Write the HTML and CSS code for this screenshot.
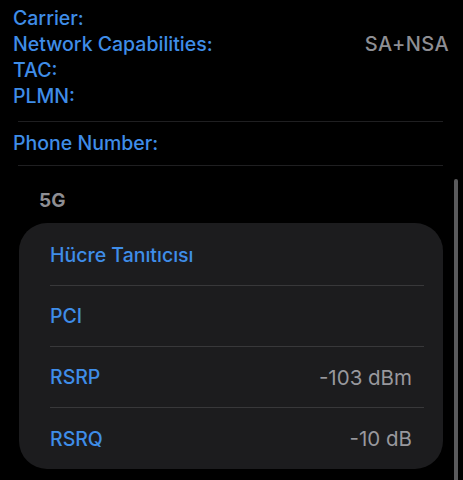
FILE: index.html
```html
<!DOCTYPE html>
<html lang="tr">
<head>
  <meta charset="UTF-8">
  <meta name="viewport" content="width=device-width, initial-scale=1.0">
  <title>Field Test</title>
  <link rel="stylesheet" href="styles.css">
</head>
<body>
  <div class="screen">
    <section class="info">
      <div class="info-row"><span>Carrier:</span></div>
      <div class="info-row"><span>Network Capabilities:</span><span class="value">SA+NSA</span></div>
      <div class="info-row"><span>TAC:</span></div>
      <div class="info-row"><span>PLMN:</span></div>
    </section>
    <hr class="divider">
    <div class="phone">Phone Number:</div>
    <hr class="divider divider-last">

    <section class="group">
      <h2 class="group-title">5G</h2>
      <div class="card">
        <div class="card-row"><span>Hücre Tanıtıcısı</span></div>
        <div class="card-row"><span>PCI</span></div>
        <div class="card-row"><span>RSRP</span><span class="value">-103 dBm</span></div>
        <div class="card-row"><span>RSRQ</span><span class="value">-10 dB</span></div>
      </div>
    </section>

    <!-- kaydırma çubuğu -->
    <div class="scrollbar"></div>
  </div>
</body>
</html>
```

FILE: styles.css
```css
* {
  margin: 0;
  padding: 0;
  box-sizing: border-box;
}

body {
  font-family: Inter, "Noto Sans", sans-serif;
  background-color: #000;
  color: #3f8de8;
  width: 463px;
  height: 480px;
  overflow: hidden;
}

.screen {
  position: relative;
  height: 480px;
}

.info {
  padding: 5px 14px 0 13px;
}

.info-row {
  display: flex;
  justify-content: space-between;
  height: 26px;
  line-height: 26px;
  font-size: 19.5px;
  font-weight: 500;
}

.value {
  color: #8e8e93;
}

.info-row .value {
  font-size: 20px;
  letter-spacing: 0.4px;
}

.divider {
  border: none;
  height: 1px;
  background-color: #1f1f21;
  margin: 12px 20px 0 18px;
}

.divider-last {
  margin-top: 0;
}

.phone {
  font-size: 19.5px;
  font-weight: 500;
  line-height: 43px;
  padding-left: 13px;
}

.group {
  padding: 0 20px 0 19px;
}

.group-title {
  font-size: 19px;
  font-weight: 700;
  color: #8e8e93;
  line-height: 24px;
  padding: 23px 0 0 20px;
}

.card {
  margin-top: 10px;
  background-color: #1c1c1e;
  border-radius: 28px;
  padding: 2px 19px 0 31px;
}

.card-row {
  display: flex;
  justify-content: space-between;
  align-items: center;
  height: 61px;
  padding-right: 12px;
  font-size: 19.5px;
  font-weight: 500;
  border-bottom: 1px solid #38383a;
}

.card-row:last-child {
  border-bottom: none;
}

.card-row .value {
  font-weight: 400;
  color: #98989d;
  font-size: 20.5px;
}

.scrollbar {
  position: absolute;
  left: 454px;
  top: 179px;
  width: 4px;
  height: 310px;
  border-radius: 2px;
  background-color: #5a5a5c;
}
```
